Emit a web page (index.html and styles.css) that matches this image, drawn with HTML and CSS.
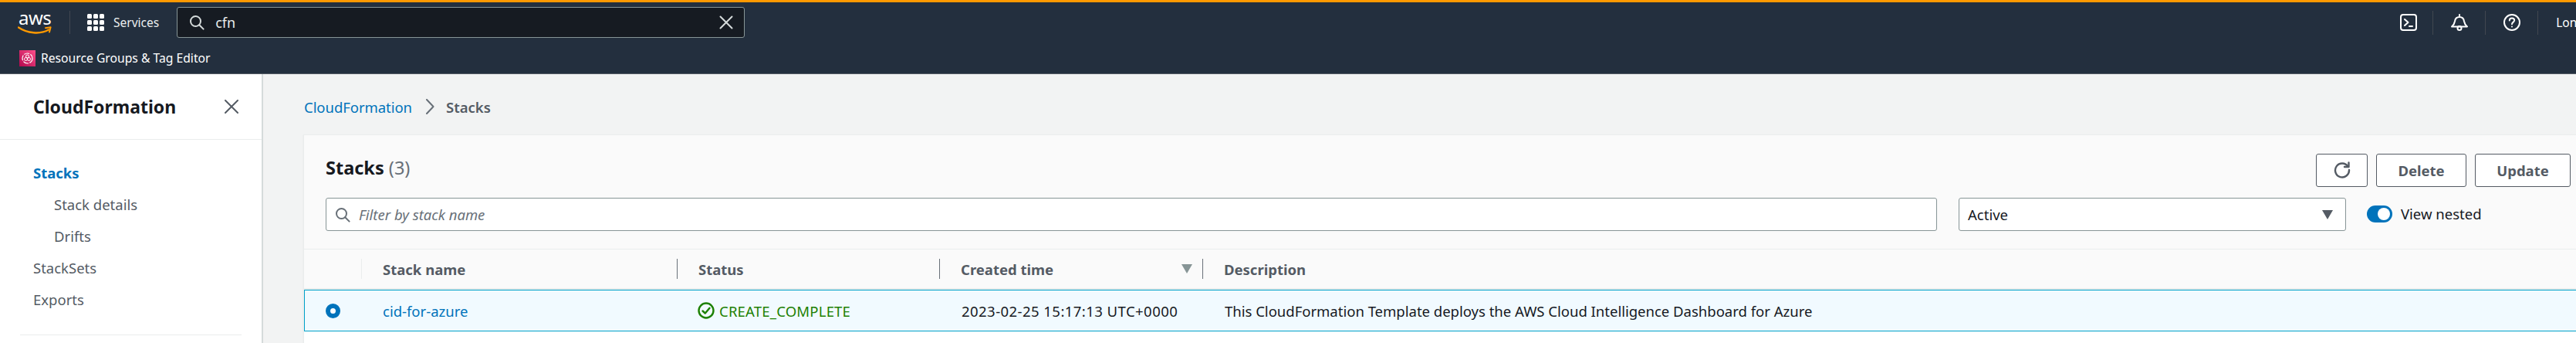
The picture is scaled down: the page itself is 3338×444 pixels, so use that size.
FILE: index.html
```html
<!DOCTYPE html>
<html lang="en">
<head>
<meta charset="utf-8">
<title>Stacks - CloudFormation</title>
<link rel="stylesheet" href="styles.css">
</head>
<body>
<header class="topbar">
  <div class="toprow">
    <div class="logo">
      <span class="logo-text">aws</span>
      <svg class="logo-smile" width="44" height="11" viewBox="0 0 44 11"><path d="M1 1.500C12 9 29 11 40 4.500" fill="none" stroke="#f90" stroke-width="2.400" stroke-linecap="round"/><path d="M36 2.200 42.600 1.200 41 7.600" fill="none" stroke="#f90" stroke-width="2" stroke-linecap="round" stroke-linejoin="round"/></svg>
    </div>
    <span class="vr logo-vr"></span>
    <svg class="grid-icon" width="22" height="22" viewBox="0 0 22 22" fill="#fff"><rect x="0" y="0" width="6" height="6" rx="1.500"/><rect x="8" y="0" width="6" height="6" rx="1.500"/><rect x="16" y="0" width="6" height="6" rx="1.500"/><rect x="0" y="8" width="6" height="6" rx="1.500"/><rect x="8" y="8" width="6" height="6" rx="1.500"/><rect x="16" y="8" width="6" height="6" rx="1.500"/><rect x="0" y="16" width="6" height="6" rx="1.500"/><rect x="8" y="16" width="6" height="6" rx="1.500"/><rect x="16" y="16" width="6" height="6" rx="1.500"/></svg>
    <span class="services">Services</span>
    <div class="search">
      <svg class="search-icon" width="20" height="20" viewBox="0 0 20 20" fill="none" stroke="#d5dbdb" stroke-width="2"><circle cx="8.500" cy="8.500" r="6.500"/><path d="M13.200 13.200 18.600 18.600" stroke-linecap="round"/></svg>
      <span class="search-text">cfn</span>
      <svg class="search-clear" width="18" height="18" viewBox="0 0 18 18" fill="none" stroke="#d5dbdb" stroke-width="2" stroke-linecap="round"><path d="M1.500 1.500 16.500 16.500M16.500 1.500 1.500 16.500"/></svg>
    </div>
    <div class="top-right">
      <svg class="tool tool-first" width="22" height="22" viewBox="0 0 22 22" fill="none" stroke="#fff" stroke-width="2" stroke-linecap="round" stroke-linejoin="round"><rect x="1" y="1" width="20" height="20" rx="3"/><path d="M6 7 10.500 11 6 15M12 16H16"/></svg>
      <span class="vr"></span>
      <svg class="tool" width="22" height="22" viewBox="0 0 22 22" fill="none" stroke="#fff" stroke-width="2" stroke-linecap="round" stroke-linejoin="round"><path d="M1 16.500C3.500 14.500 4.500 12.500 5 9.500 5.500 6 7.500 4 11 4 14.500 4 16.500 6 17 9.500 17.500 12.500 18.500 14.500 21 16.500Z"/><path d="M11 1V4"/><circle cx="11" cy="18.500" r="2.500"/></svg>
      <span class="vr"></span>
      <svg class="tool" width="22" height="22" viewBox="0 0 22 22" fill="none" stroke="#fff" stroke-width="2" stroke-linecap="round" stroke-linejoin="round"><circle cx="11" cy="11" r="10"/><path d="M7.800 8.500C7.800 6.500 9.300 5.500 11 5.500 12.800 5.500 14.200 6.700 14.200 8.300 14.200 10.500 11 10.800 11 13.300"/><path d="M11 16.500V16.600"/></svg>
      <span class="vr"></span>
      <span class="region">Lon</span>
    </div>
  </div>
  <div class="favrow">
    <svg class="fav-icon" width="21" height="21" viewBox="0 0 21 21"><defs><linearGradient id="favg" x1="0" y1="1" x2="1" y2="0"><stop offset="0" stop-color="#b0084d"/><stop offset="1" stop-color="#ff4f8b"/></linearGradient></defs><rect width="21" height="21" fill="url(#favg)"/><circle cx="10.500" cy="10.500" r="6.500" fill="none" stroke="#fff" stroke-width="1.200" stroke-dasharray="7 1.500"/><circle cx="8.500" cy="11.500" r="2" fill="none" stroke="#fff"/><circle cx="12.500" cy="11.500" r="2" fill="none" stroke="#fff"/><circle cx="10.500" cy="8" r="2" fill="none" stroke="#fff"/></svg>
    <span class="fav-text">Resource Groups &amp; Tag Editor</span>
  </div>
</header>
<div class="app">
  <nav class="sidenav">
    <div class="nav-head">
      <span class="nav-title">CloudFormation</span>
      <svg width="18" height="18" viewBox="0 0 18 18" fill="none" stroke="#545b64" stroke-width="2" stroke-linecap="round"><path d="M1 1 17 17M17 1 1 17"/></svg>
    </div>
    <ul class="nav-list">
      <li class="nav-item active">Stacks</li>
      <li class="nav-item sub">Stack details</li>
      <li class="nav-item sub">Drifts</li>
      <li class="nav-item">StackSets</li>
      <li class="nav-item">Exports</li>
    </ul>
    <div class="nav-divider"></div>
  </nav>
  <main class="main">
    <div class="crumbs">
      <span class="crumb-link">CloudFormation</span>
      <svg width="12" height="20" viewBox="0 0 12 20" fill="none" stroke="#687078" stroke-width="2" stroke-linecap="round" stroke-linejoin="round"><path d="M2 1 10.500 10 2 19"/></svg>
      <span class="crumb-current">Stacks</span>
    </div>
    <section class="card">
      <div class="card-head">
        <div class="title-row">
          <h1 class="card-title">Stacks <span class="count">(3)</span></h1>
          <div class="actions">
            <button class="btn btn-icon" type="button"><svg width="22" height="22" viewBox="0 0 22 22" fill="none" stroke="#545b64" stroke-width="2.400" stroke-linecap="round" stroke-linejoin="round"><path d="M18.500 6.500A9 9 0 1 0 20 11"/><path d="M19.500 1.500V7H14"/></svg></button>
            <button class="btn btn-delete" type="button">Delete</button>
            <button class="btn btn-update" type="button">Update</button>
          </div>
        </div>
        <div class="filter-row">
          <div class="filter">
            <svg width="20" height="20" viewBox="0 0 20 20" fill="none" stroke="#687078" stroke-width="2"><circle cx="8.500" cy="8.500" r="6.500"/><path d="M13.200 13.200 18.600 18.600" stroke-linecap="round"/></svg>
            <span class="placeholder">Filter by stack name</span>
          </div>
          <div class="select">
            <span>Active</span>
            <svg width="14" height="12" viewBox="0 0 14 12" fill="#545b64"><path d="M0 0H14L7 12Z"/></svg>
          </div>
          <div class="nested">
            <span class="toggle"><span class="knob"></span></span>
            <span class="nested-label">View nested</span>
          </div>
        </div>
      </div>
      <div class="table-head">
        <div class="th th-select"></div>
        <div class="th"><span class="th-inner first">Stack name</span></div>
        <div class="th"><span class="th-inner">Status</span></div>
        <div class="th"><span class="th-inner">Created time<svg class="sort" width="14" height="12" viewBox="0 0 14 12" fill="#879596"><path d="M0 0H14L7 12Z"/></svg></span></div>
        <div class="th"><span class="th-inner">Description</span></div>
      </div>
      <div class="table-row">
        <div class="td td-select"><span class="radio"></span></div>
        <div class="td"><span class="cell link">cid-for-azure</span></div>
        <div class="td"><span class="cell status"><svg width="22" height="22" viewBox="0 0 22 22" fill="none" stroke="#1d8102" stroke-width="2.400" stroke-linecap="round" stroke-linejoin="round"><circle cx="11" cy="11" r="9.500"/><path d="M6.500 11.500 9.800 14.500 15.500 7.800"/></svg>CREATE_COMPLETE</span></div>
        <div class="td"><span class="cell date">2023-02-25 15:17:13 UTC+0000</span></div>
        <div class="td"><span class="cell">This CloudFormation Template deploys the AWS Cloud Intelligence Dashboard for Azure</span></div>
      </div>
    </section>
  </main>
</div>
</body>
</html>
```
FILE: styles.css
```css
* { box-sizing: border-box; }
html, body { margin: 0; padding: 0; }
body {
  width: 3338px;
  height: 444px;
  overflow: hidden;
  font-family: "Noto Sans", "Open Sans", sans-serif;
  font-size: 18.500px;
  color: #16191f;
  background: #fff;
}
.topbar {
  height: 96px;
  background: #232f3e;
  border-top: 3px solid #f90;
  border-bottom: 1px solid #545b64;
}
.toprow {
  display: flex;
  align-items: center;
  height: 48px;
  padding: 4px 0 0 24px;
  color: #fff;
}
.logo { position: relative; width: 44px; height: 34px; flex: none; }
.logo-text {
  position: absolute;
  left: 0;
  top: -4px;
  font-size: 24px;
  line-height: 30px;
  letter-spacing: -.5px;
  color: #fff;
}
.logo-smile { position: absolute; left: -1px; top: 22px; }
.vr { display: block; width: 1px; height: 30px; background: #414750; flex: none; }
.logo-vr { margin-left: 22px; }
.grid-icon { margin-left: 22px; flex: none; }
.services { margin-left: 12px; font-size: 15.500px; color: #eaeded; flex: none; }
.search {
  display: flex;
  flex: none;
  align-items: center;
  width: 736px;
  height: 40px;
  margin-left: 23px;
  padding: 0 14px 0 15px;
  background: #161b22;
  border: 1px solid #879596;
  border-radius: 3px;
}
.search-text { margin-left: 14px; font-size: 18px; color: #eaeded; }
.search-clear { margin-left: auto; }
.top-right {
  display: flex;
  flex: none;
  align-items: center;
  margin-left: 2145px;
  white-space: nowrap;
}
.top-right .vr { margin: 0 23px 0 22px; height: 31px; }
.tool { flex: none; }
.tool-first { margin-right: -2px; }
.region { font-size: 15.500px; color: #fff; }
.favrow {
  display: flex;
  align-items: center;
  gap: 7px;
  height: 44px;
  padding: 4px 0 0 25px;
}
.fav-text { font-size: 15.700px; color: #fff; white-space: nowrap; }
.fav-icon { flex: none; }
.app { display: flex; height: 348px; }
.sidenav {
  width: 341px;
  flex: none;
  background: #fff;
  border-right: 2px solid #d5dbdb;
}
.nav-head {
  display: flex;
  align-items: center;
  justify-content: space-between;
  height: 85px;
  padding: 0 30px 0 43px;
  border-bottom: 1px solid #eaeded;
}
.nav-title { font-size: 23px; font-weight: 700; }
.nav-list { list-style: none; margin: 0; padding: 22px 0 0 43px; }
.nav-item { height: 41px; line-height: 41px; color: #545b64; }
.nav-item.sub { padding-left: 27px; }
.nav-item.active { color: #0073bb; font-weight: 700; }
.nav-divider { height: 1px; margin: 25px 26px 0; background: #eaeded; }
.main {
  flex: 1;
  min-width: 0;
  padding-left: 53px;
  background: #f2f3f3;
}
.crumbs { display: flex; align-items: center; height: 79px; padding-top: 5px; }
.crumb-link { color: #0073bb; letter-spacing: -.05px; }
.crumbs svg { margin: 0 15px 0 17px; }
.crumb-current { color: #545b64; font-weight: 600; }
.card {
  height: 270px;
  background: #fff;
  box-shadow: 0 0 0 1px #eaeded, -1px 0 1px #d5dbdb;
}
.card-head {
  height: 148px;
  padding: 22px 7px 0 28px;
  background: #fafafa;
  border-bottom: 1px solid #eaeded;
}
.title-row { display: flex; align-items: center; height: 43px; }
.card-title { margin: 0 0 3px; font-size: 23.500px; font-weight: 700; line-height: 40px; }
.count { font-weight: 400; color: #687078; }
.actions { display: flex; gap: 11px; margin-left: auto; margin-bottom: -3px; }
.btn {
  display: flex;
  align-items: center;
  justify-content: center;
  height: 43px;
  padding: 0;
  font: inherit;
  font-weight: 700;
  color: #545b64;
  background: #fff;
  border: 1px solid #545b64;
  border-radius: 3px;
}
.btn-icon { width: 67px; }
.btn-delete { width: 117px; }
.btn-update { width: 124px; }
.filter-row { display: flex; margin-top: 16px; height: 43px; }
.filter {
  display: flex;
  align-items: center;
  gap: 11px;
  flex: 1;
  padding-left: 11px;
  background: #fff;
  border: 1px solid #879596;
  border-radius: 3px;
}
.placeholder { font-style: italic; color: #687078; }
.select {
  display: flex;
  align-items: center;
  justify-content: space-between;
  width: 502px;
  margin-left: 28px;
  padding: 0 16px 0 11px;
  background: #fff;
  border: 1px solid #879596;
  border-radius: 3px;
}
.nested { display: flex; align-items: center; gap: 11px; width: 291px; padding-left: 27px; padding-bottom: 2px; }
.toggle {
  display: flex;
  align-items: center;
  justify-content: flex-end;
  width: 33px;
  height: 22px;
  padding-right: 3px;
  background: #0073bb;
  border-radius: 11px;
}
.knob { width: 16px; height: 16px; background: #fff; border-radius: 50%; }
.table-head, .table-row {
  display: grid;
  grid-template-columns: 74px 409px 340px 341px 1fr;
}
.table-head {
  height: 52px;
  background: #fafafa;
  border-bottom: 2px solid #eaeded;
}
.th { display: flex; align-items: center; }
.th-inner {
  display: flex;
  align-items: center;
  height: 26px;
  width: 100%;
  padding-left: 27px;
  font-weight: 700;
  color: #545b64;
  border-left: 1px solid #687078;
}
.th-inner.first { border-left-color: #eaeded; }
.sort { margin-left: 166px; }
.table-row {
  height: 54px;
  background: #f1faff;
  border: solid #00a1c9;
  border-width: 1px 0 1px 1px;
}
.td { display: flex; align-items: center; min-width: 0; }
.td-select { padding-left: 27px; }
.cell { padding-left: 28px; white-space: nowrap; }
.td:nth-child(2) .cell { padding-left: 27px; }
.radio { width: 19px; height: 19px; border: 6px solid #0073bb; border-radius: 50%; background: #fff; }
.link { color: #0073bb; }
.status { display: flex; align-items: center; gap: 6px; padding-left: 26px; color: #1d8102; letter-spacing: .2px; }
.date { letter-spacing: .45px; }
```
